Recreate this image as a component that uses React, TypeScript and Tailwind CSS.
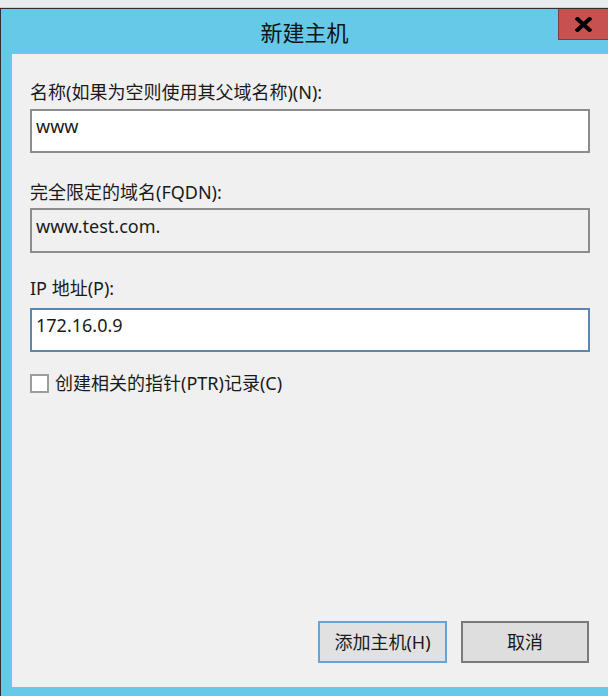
export default function App() {
  const font = {
    fontFamily: '"Noto Sans", "Noto Sans CJK SC", sans-serif',
  };

  return (
    <div className="h-[696px] w-[608px] overflow-hidden bg-[#e4e9ed]" style={font}>
      {/* strip of the desktop above the dialog */}
      <div className="h-[8px] border-b border-[#c9d0d6] bg-[#e8ecef]" />

      <div className="flex h-[688px] flex-col border-l border-t border-[#303030] bg-[#66c9e8]">
        {/* title bar */}
        <div className="relative flex h-[45px] shrink-0 items-center justify-center pt-[1px]">
          <span className="text-[22px] leading-[28px] text-[#111]">新建主机</span>
          <button className="absolute right-0 top-0 flex h-[31px] w-[50px] items-center justify-center border-b border-l border-[#7a4040] bg-[#c75050]">
            <svg width="17" height="15" viewBox="0 0 17 15">
              <path d="M2.5 2 L14.5 13 M14.5 2 L2.5 13" stroke="#000" strokeWidth="4" strokeLinecap="square" />
            </svg>
          </button>
        </div>

        {/* body */}
        <div className="mb-[9px] ml-[11px] flex flex-1 flex-col bg-[#f0f0f0] px-[18px] text-[18px] leading-[24px] text-[#1a1a1a]">
          <p className="pt-[26px]">名称(如果为空则使用其父域名称)(N):</p>
          <div className="mt-[5px] h-[44px] border-2 border-[#8c8c8c] bg-white px-[4px] pt-[3px]">www</div>

          <p className="mt-[27px]">完全限定的域名(FQDN):</p>
          <div className="mt-[4px] h-[45px] border-2 border-[#8c8c8c] bg-[#f0f0f0] px-[4px] pt-[4px]">
            www.test.com.
          </div>

          <p className="mt-[23px]">IP 地址(P):</p>
          <div className="mt-[8px] h-[44px] border-2 border-[#5b86ae] bg-white px-[4px] pt-[3px]">172.16.0.9</div>

          <label className="mt-[19px] flex items-center gap-[6px]">
            <span className="h-[19px] w-[19px] border-2 border-[#9c9c9c] bg-white" />
            <span>创建相关的指针(PTR)记录(C)</span>
          </label>

          <div className="mr-[1px] mt-auto flex justify-end gap-[14px] pb-[24px]">
            <button className="h-[42px] w-[129px] border-2 border-[#6aa2d4] bg-[#e1e1e1] text-[18px]">
              添加主机(H)
            </button>
            <button className="h-[42px] w-[128px] border-2 border-[#7a7a7a] bg-[#dedede] text-[18px]">
              取消
            </button>
          </div>
        </div>
      </div>
    </div>
  );
}
